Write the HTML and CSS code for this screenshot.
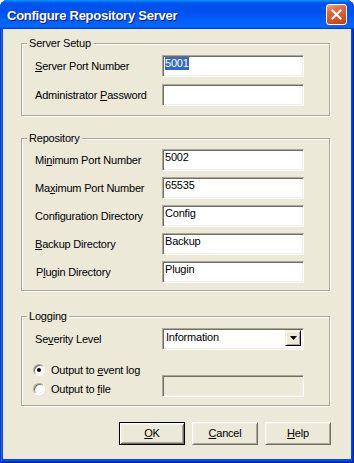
FILE: index.html
```html
<!DOCTYPE html>
<html>
<head>
<meta charset="utf-8">
<title>Configure Repository Server</title>
<link rel="stylesheet" href="styles.css">
</head>
<body>
<div class="window">
  <div class="titlebar">
    <span class="title">Configure Repository Server</span>
    <span class="close" aria-label="Close">
      <svg width="11" height="11" viewBox="0 0 11 11"><path d="M1.5 1.5 L9.5 9.5 M9.5 1.5 L1.5 9.5" stroke="#fff" stroke-width="2.2" stroke-linecap="square" fill="none"/></svg>
    </span>
  </div>
  <div class="client">
    <div class="group g1">
      <span class="legend">Server Setup</span>
      <div class="rows rows-wide">
        <span class="label"><u>S</u>erver Port Number</span>
        <div class="edit"><span class="sel">5001</span></div>
        <span class="label">Administrator <u>P</u>assword</span>
        <div class="edit"></div>
      </div>
    </div>

    <div class="group g2">
      <span class="legend">Repository</span>
      <div class="rows">
        <span class="label">Mi<u>n</u>imum Port Number</span>
        <div class="edit">5002</div>
        <span class="label">Ma<u>x</u>imum Port Number</span>
        <div class="edit">65535</div>
        <span class="label">Configuration Directory</span>
        <div class="edit">Config</div>
        <span class="label"><u>B</u>ackup Directory</span>
        <div class="edit">Backup</div>
        <span class="label label-in">P<u>l</u>ugin Directory</span>
        <div class="edit">Plugin</div>
      </div>
    </div>

    <div class="group g3">
      <span class="legend">Logging</span>
      <div class="rows rows-log">
        <span class="label">Se<u>v</u>erity Level</span>
        <div class="combo">
          <span class="combo-text">Information</span>
          <span class="combo-btn"><svg width="7" height="4" viewBox="0 0 7 4"><path d="M0 0 H7 L3.5 4 Z" fill="#000"/></svg></span>
        </div>
        <div class="radios">
          <div class="radio-row"><span class="radio checked"></span><span>Output to <u>e</u>vent log</span></div>
          <div class="radio-row"><span class="radio"></span><span>Output to <u>f</u>ile</span></div>
        </div>
        <div class="edit disabled"></div>
      </div>
    </div>

    <div class="buttons">
      <span class="btn default"><span class="btn-in"><u>O</u>K</span></span>
      <span class="btn"><span class="btn-in"><u>C</u>ancel</span></span>
      <span class="btn"><span class="btn-in"><u>H</u>elp</span></span>
    </div>
  </div>
</div>
</body>
</html>
```
FILE: styles.css
```css
html, body {
  margin: 0;
  padding: 0;
  background: #ffffff;
}

.window {
  width: 354px;
  height: 463px;
  display: flex;
  flex-direction: column;
  background: #0a48df;
  border-radius: 8px 8px 0 0;
  overflow: hidden;
  box-shadow: inset 1px 0 #0831d9, inset -1px 0 #001ea0, inset 0 -1px #001ea0, inset 2px 0 #166aee, inset -2px 0 #003bda, inset 0 -2px #003bda;
}

.titlebar {
  height: 29px;
  flex: none;
  display: flex;
  align-items: center;
  padding: 0 7px 0 7px;
  background: linear-gradient(180deg, #0997ff 0%, #0053ee 10%, #0050ee 40%, #0066ff 86%, #0066ff 92%, #005bff 95%, #003dd7 97%, #003dd7 100%);
}

.title {
  flex: 1;
  color: #ffffff;
  font: bold 13px "Liberation Sans", Arial, sans-serif;
  letter-spacing: -0.25px;
  text-shadow: 1px 1px #0f1089;
  padding-top: 1px;
}

.close {
  width: 19px;
  height: 19px;
  border: 1px solid #ffffff;
  border-radius: 3px;
  display: flex;
  align-items: center;
  justify-content: center;
  background: linear-gradient(160deg, #f3a58a 0%, #e5683d 30%, #d84e22 70%, #c2400e 100%);
}

.client {
  flex: 1;
  margin: 0 3px 4px 3px;
  background: #ece9d8;
  padding: 14px 21px 0 18px;
  font: 11px "Liberation Sans", Arial, sans-serif;
  letter-spacing: -0.2px;
  color: #000000;
  display: flex;
  flex-direction: column;
}

.group {
  position: relative;
  border: 1px solid #aca899;
  box-shadow: inset 1px 1px #ffffff, 1px 1px #ffffff;
  padding: 10px 25px 8px 13px;
}

.g1 {
  padding-top: 11px;
  padding-bottom: 9px;
}

.g2 {
  margin-top: 22px;
  padding-top: 10px;
  padding-bottom: 7px;
}

.g3 {
  margin-top: 25px;
  padding-top: 11px;
  padding-bottom: 7px;
}

.legend {
  position: absolute;
  left: 5px;
  top: -7px;
  padding: 0 2px;
  line-height: 13px;
  background: #ece9d8;
}

.rows {
  display: grid;
  grid-template-columns: 1fr 142px;
  row-gap: 6px;
  align-items: center;
}

.rows-wide {
  row-gap: 7px;
}

.rows-log {
  row-gap: 10px;
}

.label {
  line-height: 13px;
  white-space: nowrap;
}

.label-in {
  padding-left: 1px;
}

.edit {
  box-sizing: content-box;
  height: 19px;
  border: 1px solid;
  border-color: #aca899 #ffffff #ffffff #aca899;
  box-shadow: inset 1px 1px #716f64, inset -1px -1px #f1efe2;
  background: #ffffff;
  line-height: 13px;
  padding: 1px 1px 0 2px;
  white-space: nowrap;
  overflow: hidden;
}

.edit.disabled {
  background: #ece9d8;
  align-self: end;
  margin-bottom: 1px;
}

.sel {
  display: inline-block;
  background: #316ac5;
  color: #ffffff;
  line-height: 13px;
}

.combo {
  height: 19px;
  border: 1px solid;
  border-color: #aca899 #ffffff #ffffff #aca899;
  box-shadow: inset 1px 1px #716f64, inset -1px -1px #f1efe2;
  background: #ffffff;
  display: flex;
  align-items: flex-start;
  padding: 1px 2px 0 2px;
}

.combo-text {
  flex: 1;
  line-height: 15px;
  padding-left: 1px;
}

.combo-btn {
  width: 12px;
  height: 14px;
  border: 1px solid;
  border-color: #ece9d8 #000000 #000000 #ece9d8;
  box-shadow: inset 1px 1px #ffffff, inset -1px -1px #aca899;
  background: #ece9d8;
  display: flex;
  align-items: center;
  justify-content: center;
  padding: 0 1px;
}

.radios {
  display: flex;
  flex-direction: column;
  margin-left: -2px;
}

.radio-row {
  height: 19px;
  display: flex;
  align-items: center;
  white-space: nowrap;
}

.radio {
  width: 10px;
  height: 10px;
  border-radius: 50%;
  border: 1px solid;
  border-color: #aca899 #ffffff #ffffff #aca899;
  box-shadow: inset 1px 1px #716f64, inset -1px -1px #f1efe2;
  background: #ffffff;
  margin-right: 6px;
  display: flex;
  align-items: center;
  justify-content: center;
}

.radio.checked::after {
  content: "";
  width: 4px;
  height: 4px;
  border-radius: 50%;
  background: #000000;
}

.buttons {
  margin-top: 16px;
  margin-right: -1px;
  display: flex;
  justify-content: flex-end;
  gap: 7px;
}

.btn {
  width: 66px;
  height: 23px;
  box-sizing: border-box;
  border: 1px solid;
  border-color: #ffffff #716f64 #716f64 #ffffff;
  box-shadow: inset 1px 1px #f1efe2, inset -1px -1px #aca899;
  background: #ece9d8;
  display: flex;
}

.btn.default {
  border: 1px solid #000000;
  box-shadow: inset 1px 1px #ffffff, inset -1px -1px #716f64, inset 2px 2px #f1efe2, inset -2px -2px #aca899;
}

.btn-in {
  flex: 1;
  display: flex;
  align-items: center;
  justify-content: center;
  line-height: 13px;
}
```
